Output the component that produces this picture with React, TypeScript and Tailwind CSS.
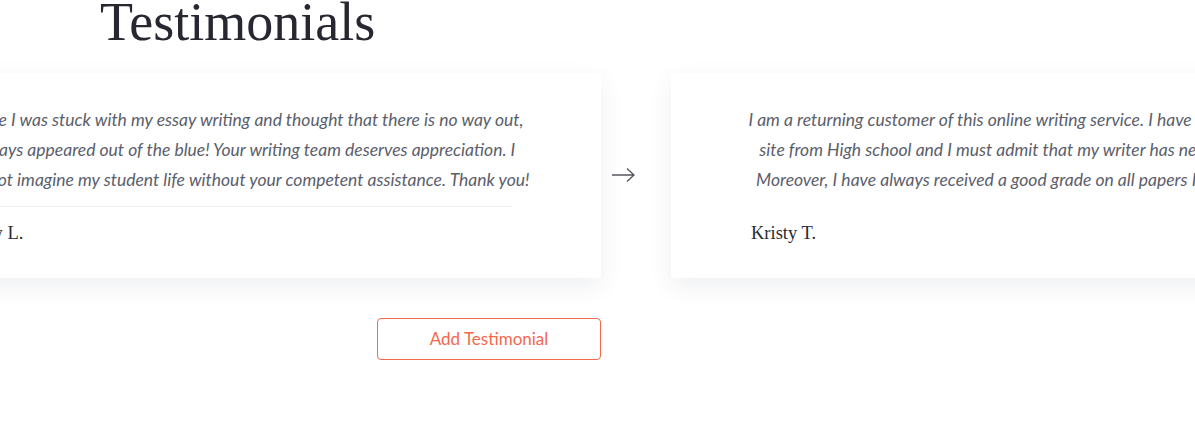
import React from "react";

const body = "font-['Lato',sans-serif] italic text-[17.5px] leading-[30px] text-[#5b5e6b]";

function Card({ lines, name, divider }: { lines: string[]; name: string; divider?: boolean }) {
  return (
    <div className="w-[710px] h-[205px] shrink-0 bg-white rounded-[4px] shadow-[0_8px_24px_rgba(40,50,80,0.08)] pt-[32px] px-[80px] flex flex-col">
      <div className={`${body} flex flex-col items-center`}>
        {lines.map((l, i) => (
          <div key={i} className="whitespace-nowrap">
            {l}
          </div>
        ))}
      </div>
      <div className={`mt-[11px] h-px ${divider ? "bg-[#eef0f4]" : "bg-transparent"} mr-[9px]`} />
      <div className="mt-[14px] font-['Liberation_Serif',serif] text-[18.5px] leading-[24px] text-[#2a2b33]">{name}</div>
    </div>
  );
}

export default function App() {
  return (
    <div className="w-[1195px] h-[441px] overflow-hidden bg-white relative">
      <h2 className="mt-[-5px] pl-[100px] font-['Liberation_Serif',serif] text-[54px] leading-none text-[#272731]">
        Testimonials
      </h2>
      <div className="relative mt-[24px] flex gap-[70px] ml-[-109px]">
        <Card
          divider
          lines={[
            "Once I was stuck with my essay writing and thought that there is no way out,",
            "essays appeared out of the blue! Your writing team deserves appreciation. I",
            "cannot imagine my student life without your competent assistance. Thank you!",
          ]}
          name="Guy L."
        />
        <Card
          lines={[
            "I am a returning customer of this online writing service. I have been using this",
            "site from High school and I must admit that my writer has never failed me.",
            "Moreover, I have always received a good grade on all papers I ordered here.",
          ]}
          name="Kristy T."
        />
        <svg
          className="absolute left-[720px] top-[94px]"
          width="26"
          height="16"
          viewBox="0 0 26 16"
          fill="none"
          stroke="#55565f"
          strokeWidth="1.3"
        >
          <path d="M1 8h22M16 1.5l7 6.5-7 6.5" />
        </svg>
      </div>
      <div className="mt-[40px] pl-[377px]">
        <button className="w-[224px] h-[42px] border border-[#f2694f] rounded-[4px] text-[#f2694f] font-['Lato',sans-serif] text-[17px]">
          Add Testimonial
        </button>
      </div>
    </div>
  );
}
